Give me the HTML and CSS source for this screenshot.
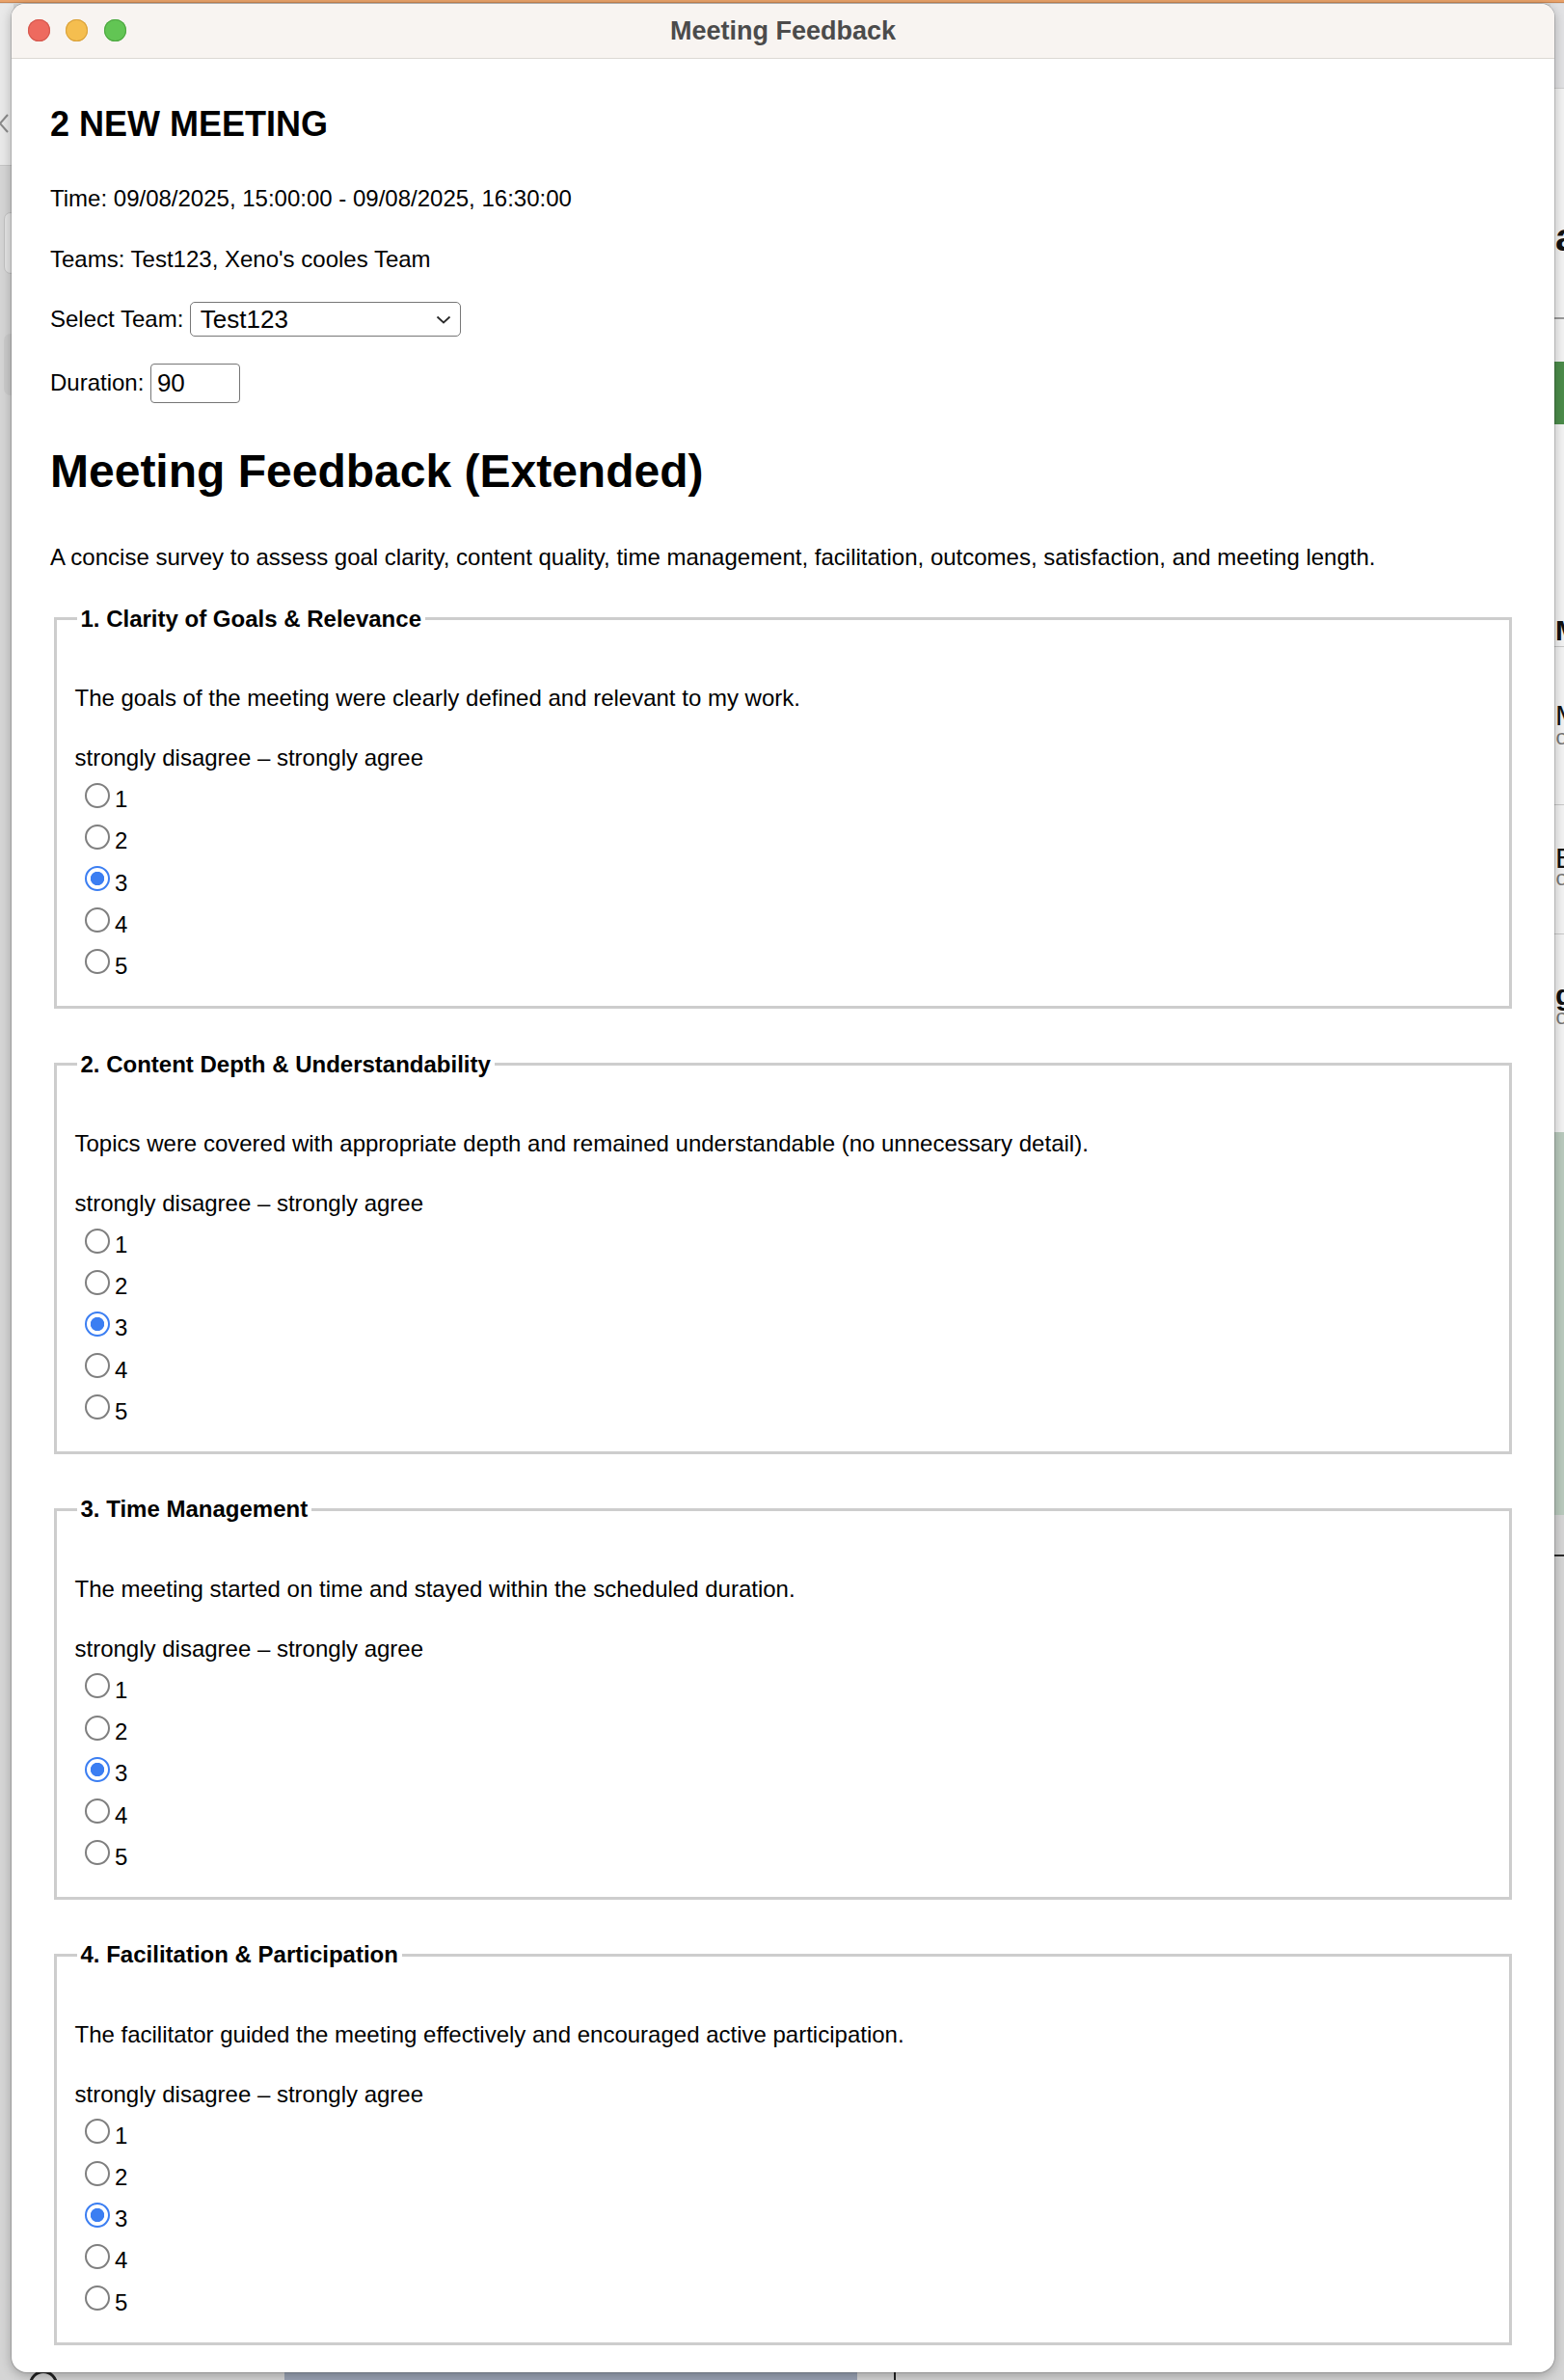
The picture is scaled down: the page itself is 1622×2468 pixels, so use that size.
FILE: index.html
```html
<!DOCTYPE html>
<html lang="en">
<head>
<meta charset="utf-8">
<title>Meeting Feedback</title>
<link rel="stylesheet" href="styles.css">
</head>
<body>
<div class="bg" aria-hidden="true">
  <div class="bg-top"></div>
  <div class="bg-lt"></div>
  <svg class="bg-arrow" width="12" height="22" viewBox="0 0 12 22"><path d="M10 2 L2 11 L10 20" fill="none" stroke="#8a8a8a" stroke-width="2"/></svg>
  <div class="bg-l1"></div>
  <div class="bg-l2"></div>
  <div class="bg-rt"></div>
  <div class="bg-rmain">
    <span class="rl rl-a">a</span>
    <span class="rl-dash"></span>
    <span class="rl-green"></span>
    <span class="rl rl-m1">M</span>
    <span class="rl-hr rl-hr1"></span>
    <span class="rl rl-m2">M</span><span class="rl-co rl-co1">co</span>
    <span class="rl-hr rl-hr2"></span>
    <span class="rl rl-e">E</span><span class="rl-co rl-co2">co</span>
    <span class="rl-hr rl-hr3"></span>
    <span class="rl rl-g">g</span><span class="rl-co rl-co3">co</span>
  </div>
  <div class="bg-rgreen"></div>
  <div class="bg-rline"></div>
  <div class="bg-bblue"></div>
  <div class="bg-bline"></div>
  <div class="bg-bicon"></div>
</div>

<div class="window">
  <div class="titlebar">
    <div class="lights">
      <span class="light red"></span>
      <span class="light yellow"></span>
      <span class="light green"></span>
    </div>
    <div class="title">Meeting Feedback</div>
    <div></div>
  </div>

  <div class="content">
    <h2 class="meeting-name">2 NEW MEETING</h2>
    <p class="line time">Time: 09/08/2025, 15:00:00 - 09/08/2025, 16:30:00</p>
    <p class="line teams">Teams: Test123, Xeno's cooles Team</p>

    <div class="row select-row">
      <label class="row-label" for="team">Select Team:</label>
      <div class="select-wrap">
        <select id="team" class="select"><option>Test123</option><option>Xeno's cooles Team</option></select>
        <svg class="chev" width="16" height="9" viewBox="0 0 16 9"><path d="M1.5 1.5 L8 7.5 L14.5 1.5" fill="none" stroke="#2b2b2b" stroke-width="1.8"/></svg>
      </div>
    </div>

    <div class="row dur-row">
      <label class="row-label" for="dur">Duration:</label>
      <input id="dur" class="dur" type="text" value="90">
    </div>

    <h1 class="survey-title">Meeting Feedback (Extended)</h1>
    <p class="desc">A concise survey to assess goal clarity, content quality, time management, facilitation, outcomes, satisfaction, and meeting length.</p>

    <fieldset class="q">
      <legend>1. Clarity of Goals &amp; Relevance</legend>
      <p class="q-text">The goals of the meeting were clearly defined and relevant to my work.</p>
      <div class="scale">
        <div class="scale-label">strongly disagree – strongly agree</div>
        <label class="opt"><input type="radio" name="q1" value="1">1</label>
        <label class="opt"><input type="radio" name="q1" value="2">2</label>
        <label class="opt"><input type="radio" name="q1" value="3" checked>3</label>
        <label class="opt"><input type="radio" name="q1" value="4">4</label>
        <label class="opt"><input type="radio" name="q1" value="5">5</label>
      </div>
    </fieldset>

    <fieldset class="q">
      <legend>2. Content Depth &amp; Understandability</legend>
      <p class="q-text">Topics were covered with appropriate depth and remained understandable (no unnecessary detail).</p>
      <div class="scale">
        <div class="scale-label">strongly disagree – strongly agree</div>
        <label class="opt"><input type="radio" name="q2" value="1">1</label>
        <label class="opt"><input type="radio" name="q2" value="2">2</label>
        <label class="opt"><input type="radio" name="q2" value="3" checked>3</label>
        <label class="opt"><input type="radio" name="q2" value="4">4</label>
        <label class="opt"><input type="radio" name="q2" value="5">5</label>
      </div>
    </fieldset>

    <fieldset class="q">
      <legend>3. Time Management</legend>
      <p class="q-text">The meeting started on time and stayed within the scheduled duration.</p>
      <div class="scale">
        <div class="scale-label">strongly disagree – strongly agree</div>
        <label class="opt"><input type="radio" name="q3" value="1">1</label>
        <label class="opt"><input type="radio" name="q3" value="2">2</label>
        <label class="opt"><input type="radio" name="q3" value="3" checked>3</label>
        <label class="opt"><input type="radio" name="q3" value="4">4</label>
        <label class="opt"><input type="radio" name="q3" value="5">5</label>
      </div>
    </fieldset>

    <fieldset class="q">
      <legend>4. Facilitation &amp; Participation</legend>
      <p class="q-text">The facilitator guided the meeting effectively and encouraged active participation.</p>
      <div class="scale">
        <div class="scale-label">strongly disagree – strongly agree</div>
        <label class="opt"><input type="radio" name="q4" value="1">1</label>
        <label class="opt"><input type="radio" name="q4" value="2">2</label>
        <label class="opt"><input type="radio" name="q4" value="3" checked>3</label>
        <label class="opt"><input type="radio" name="q4" value="4">4</label>
        <label class="opt"><input type="radio" name="q4" value="5">5</label>
      </div>
    </fieldset>
  </div>
</div>
</body>
</html>
```

FILE: styles.css
```css
* { box-sizing: border-box; }

html, body { margin: 0; padding: 0; }

body {
  width: 1622px;
  height: 2468px;
  overflow: hidden;
  position: relative;
  background: #d5d5d5;
  font-family: "Liberation Sans", Arial, sans-serif;
  color: #000;
}

/* ---------- background app slivers ---------- */
.bg { position: absolute; inset: 0; z-index: 0; }
.bg > * { position: absolute; }
.bg-top { left: 0; top: 0; width: 1622px; height: 3px; background: #e9a26a; border-bottom: 1px solid #c98450; }
.bg-lt { left: 0; top: 4px; width: 14px; height: 168px; background: #e9e9e9; border-bottom: 1px solid #c6c6c6; }
.bg-arrow { left: -2px; top: 117px; }
.bg-l1 { left: 4px; top: 220px; width: 14px; height: 64px; border: 1px solid #c2c2c2; border-radius: 7px; background: #e4e4e4; }
.bg-l2 { left: 4px; top: 346px; width: 14px; height: 64px; border-radius: 7px; background: #cbcbcb; }
.bg-rt { left: 1608px; top: 4px; width: 14px; height: 88px; background: #e2e2e4; border-bottom: 1px solid #cfcfcf; }
.bg-rmain { left: 1608px; top: 92px; width: 14px; height: 1082px; background: #f3f3f3; overflow: hidden; }
.bg-rmain > * { position: absolute; }
.rl { left: 5px; font-weight: bold; font-size: 30px; line-height: 24px; color: #111; }
.rl-a { top: 138px; font-size: 40px; line-height: 32px; }
.rl-dash { left: 4px; top: 237px; width: 12px; border-top: 2px dashed #9a9a9a; }
.rl-green { left: 4px; top: 283px; width: 12px; height: 65px; background: #4b8c4a; }
.rl-m1 { top: 550px; }
.rl-hr { left: 4px; width: 12px; height: 1px; background: #c8c8c8; }
.rl-hr1 { top: 578px; }
.rl-m2 { top: 638px; font-weight: normal; }
.rl-co { left: 5px; font-family: "Liberation Mono", monospace; font-size: 22px; line-height: 18px; color: #777; }
.rl-co1 { top: 666px; }
.rl-hr2 { top: 742px; }
.rl-e { top: 786px; font-weight: normal; }
.rl-co2 { top: 812px; }
.rl-hr3 { top: 876px; }
.rl-g { top: 928px; }
.rl-co3 { top: 956px; }
.bg-rgreen { left: 1608px; top: 1174px; width: 14px; height: 397px; background: #b9cabd; }
.bg-rline { left: 1608px; top: 1612px; width: 14px; height: 2px; background: #2a2a2a; }
.bg-bblue { left: 295px; top: 2456px; width: 594px; height: 12px; background: #99a2b4; }
.bg-bline { left: 927px; top: 2456px; width: 2px; height: 12px; background: #222; }
.bg-bicon { left: 30px; top: 2458px; width: 30px; height: 30px; border: 3px solid #222; border-radius: 50%; }

/* ---------- window ---------- */
.window {
  position: relative;
  z-index: 1;
  margin: 4px 0 0 12px;
  width: 1600px;
  height: 2456px;
  background: #fff;
  border-radius: 14px 14px 16px 16px;
  overflow: hidden;
  box-shadow: 0 0 0 1px rgba(0, 0, 0, 0.14), 0 3px 12px rgba(0, 0, 0, 0.28);
}

.titlebar {
  height: 57px;
  background: #f8f4f1;
  border-bottom: 1px solid #dcd8d4;
  display: grid;
  grid-template-columns: 1fr auto 1fr;
  align-items: center;
}

.lights { display: flex; gap: 16.5px; padding-left: 16.5px; padding-bottom: 1px; }
.light { width: 23px; height: 23px; border-radius: 50%; display: block; }
.red { background: #ee6a5f; box-shadow: inset 0 0 0 1px #d55a50; }
.yellow { background: #f5be4f; box-shadow: inset 0 0 0 1px #d9a23d; }
.green { background: #62c554; box-shadow: inset 0 0 0 1px #4fa843; }

.title {
  font-size: 27px;
  font-weight: bold;
  color: #4b4b4b;
}

/* ---------- content ---------- */
.content { padding: 46.5px 40px 0; }

.meeting-name {
  margin: 0;
  font-size: 36px;
  line-height: 42px;
  font-weight: bold;
}

.line { margin: 0; font-size: 24px; line-height: 28px; }
.time { margin-top: 42.5px; }
.teams { margin-top: 35.4px; }

.row { display: flex; align-items: center; font-size: 24px; line-height: 28px; }
.row-label { margin-right: 6.5px; }
.select-row { margin-top: 29.6px; height: 36px; }
.dur-row { margin-top: 28px; height: 41px; }

.select-wrap { position: relative; width: 281px; height: 36px; }
.select {
  appearance: none;
  -webkit-appearance: none;
  width: 100%;
  height: 100%;
  margin: 0;
  padding: 0 0 0 10px;
  border: 1.6px solid #777;
  border-radius: 5px;
  background: #fff;
  color: #000;
  font-family: "Liberation Sans", Arial, sans-serif;
  font-size: 26px;
}
.chev { position: absolute; right: 10px; top: 14px; pointer-events: none; }

.dur {
  width: 93px;
  height: 41px;
  margin: 0;
  padding: 0 6px;
  border: 1.6px solid #767676;
  border-radius: 4px;
  font-family: "Liberation Sans", Arial, sans-serif;
  font-size: 26px;
  color: #000;
}

.survey-title {
  margin: 43.4px 0 0;
  font-size: 48px;
  line-height: 56px;
  font-weight: bold;
}

.desc { margin: 46.9px 0 0; font-size: 24px; line-height: 28px; }

/* ---------- question fieldsets ---------- */
.q {
  margin: 35.4px 4px 0;
  padding: 0 18.5px 27px;
  border: 3px solid #cdcdcd;
  min-width: 0;
}
.q + .q { margin-top: 43.7px; }

.q legend {
  margin-left: 2px;
  padding: 0 4px;
  font-size: 24px;
  line-height: 28px;
  font-weight: bold;
}

.q-text { margin: 54.7px 0 0; font-size: 24px; line-height: 28px; }

.scale {
  margin-top: 33.6px;
  display: flex;
  flex-direction: column;
  gap: 15.2px;
  font-size: 24px;
  line-height: 28px;
}

.opt { display: flex; align-items: center; height: 28px; }

.opt input {
  appearance: none;
  -webkit-appearance: none;
  flex: none;
  width: 26px;
  height: 26px;
  margin: 0 5.5px 9px 10px;
  border: 2px solid #7f7f7f;
  border-radius: 50%;
  background: #fff;
}
.opt input:checked {
  border: 2.2px solid #3b7ef2;
  background: radial-gradient(circle, #3b7ef2 0 6.8px, #fff 7.5px);
}
```
